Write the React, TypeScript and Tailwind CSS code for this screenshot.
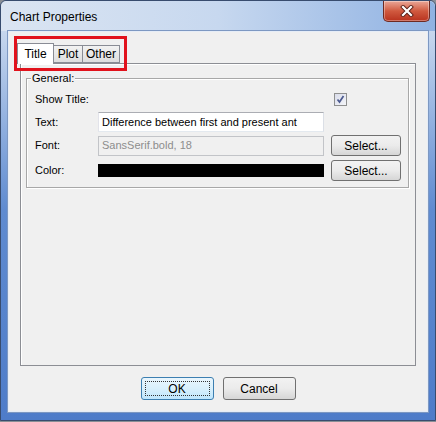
const ui = { fontFamily: '"Liberation Sans", Tahoma, Arial, sans-serif' };

function CloseButton() {
  return (
    <div className="flex h-[21px] w-[47px] items-center justify-center rounded-b-[5px] border border-t-0 border-[#6e2a22] bg-gradient-to-b from-[#e9a798] via-[#d0593f] to-[#b8311d] shadow-[inset_0_0_0_1px_rgba(255,255,255,0.35)]">
      <svg viewBox="0 0 14 12" className="h-[12px] w-[14px]">
        <path d="M3 2l8 8M11 2l-8 8" stroke="#5a2018" strokeWidth="4" strokeLinecap="square" />
        <path d="M3 2l8 8M11 2l-8 8" stroke="#fff" strokeWidth="2.2" strokeLinecap="square" />
      </svg>
    </div>
  );
}

function Checkbox() {
  return (
    <div className="flex h-[13px] w-[13px] items-center justify-center border border-[#8e8f8f] bg-gradient-to-br from-[#d9dcea] to-[#f4f5f8]">
      <svg viewBox="0 0 9 9" className="h-[9px] w-[9px]">
        <path d="M1.5 4.5l2 2.5 4-6" fill="none" stroke="#4c5a8f" strokeWidth="1.7" />
      </svg>
    </div>
  );
}

function WinButton({ label, focused }: { label: string; focused?: boolean }) {
  return (
    <button
      className={`flex items-center justify-center rounded-[3px] border text-[12px] text-black ${
        focused
          ? "border-[#3c7fb1] bg-gradient-to-b from-[#eaf6fd] via-[#d9f0fc] to-[#bee6fd]"
          : "border-[#707070] bg-gradient-to-b from-[#f2f2f2] via-[#ebebeb] to-[#d6d6d6]"
      } h-full w-full`}
      style={ui}
    >
      {focused ? (
        <span className="flex h-[calc(100%-6px)] w-[calc(100%-6px)] items-center justify-center border border-dotted border-[#333]">
          {label}
        </span>
      ) : (
        label
      )}
    </button>
  );
}

export default function App() {
  return (
    <div className="relative h-[422px] w-[436px] bg-[#8a8f96]">
      <div
        className="flex h-[421px] w-[436px] flex-col rounded-t-[6px] border border-[#384c6e] bg-gradient-to-b from-[#d9e4f2] via-[#5f8bd0] to-[#4e7cc9]"
        style={ui}
      >
        {/* title bar */}
        <div className="flex h-[30px] items-start justify-between rounded-t-[6px] bg-gradient-to-r from-[#dbe5f2] via-[#c7d8ef] to-[#90b2e2]">
          <span className="pl-[9px] pt-[9px] text-[12px] leading-[14px] text-black">Chart Properties</span>
          <div className="mr-[5px]">
            <CloseButton />
          </div>
        </div>

        {/* client area */}
        <div className="mx-[7px] flex h-[381px] flex-col border border-[#e6edf7] bg-[#f0f0f0] shadow-[0_0_0_1px_#7d98c2]">
          <div className="mt-[11px] px-[11px]">
            {/* tabs */}
            <div className="-ml-[3px] flex h-[20px] items-end">
              <div className="z-10 -mb-px flex h-[21px] w-[37px] items-center justify-center border border-b-0 border-[#898c95] bg-white text-[12px] text-black">
                Title
              </div>
              <div className="flex h-[18px] w-[29px] items-center justify-center border border-l-0 border-[#898c95] bg-gradient-to-b from-[#f2f2f2] to-[#dedede] text-[12px] text-black">
                Plot
              </div>
              <div className="flex h-[18px] w-[37px] items-center justify-center border border-l-0 border-[#898c95] bg-gradient-to-b from-[#f2f2f2] to-[#dedede] text-[12px] text-black">
                Other
              </div>
            </div>

            {/* tab panel */}
            <div className="h-[303px] border border-[#8c8e94] bg-[#f0f0f0] px-[5px] pt-[14px] shadow-[inset_1px_1px_0_#fff]">
              <div className="relative mr-[1px] h-[110px] border border-[#a8a8a8] shadow-[inset_1px_1px_0_#fff,1px_1px_0_#fff] pl-[8px] pt-[12px]">
                <span className="absolute -top-[8px] left-[4px] bg-[#f0f0f0] px-[1px] text-[11px] leading-[14px] text-black">
                  General:
                </span>

                <div className="flex h-[16px] items-center">
                  <span className="w-[63px] text-[11px] text-black">Show Title:</span>
                  <span className="w-[226px]" />
                  <span className="ml-[10px]">
                    <Checkbox />
                  </span>
                </div>

                <div className="mt-[5px] flex h-[20px] items-center">
                  <span className="w-[63px] text-[11px] text-black">Text:</span>
                  <div className="flex h-[20px] w-[226px] items-center border border-[#abadb3] border-l-[#e2e3ea] border-r-[#dbdfe6] border-b-[#e3e9ef] bg-white pl-[3px] text-[11px] text-black">
                    Difference between first and present ant
                  </div>
                </div>

                <div className="mt-[3px] flex h-[21px] items-center">
                  <span className="w-[63px] text-[11px] text-black">Font:</span>
                  <div className="flex h-[20px] w-[226px] items-center border border-[#c2c4c8] bg-[#f0f0f0] pl-[3px] text-[11px] text-[#8d8d8d]">
                    SansSerif.bold, 18
                  </div>
                  <div className="ml-[7px] h-[21px] w-[70px]">
                    <WinButton label="Select..." />
                  </div>
                </div>

                <div className="mt-[4px] flex h-[21px] items-center">
                  <span className="w-[63px] text-[11px] text-black">Color:</span>
                  <div className="h-[13px] w-[226px] bg-black" />
                  <div className="ml-[7px] h-[21px] w-[70px]">
                    <WinButton label="Select..." />
                  </div>
                </div>
              </div>
            </div>
          </div>

          {/* dialog buttons */}
          <div className="mt-[11px] flex justify-center gap-[9px]">
            <div className="h-[23px] w-[73px]">
              <WinButton label="OK" focused />
            </div>
            <div className="h-[23px] w-[73px]">
              <WinButton label="Cancel" />
            </div>
          </div>
        </div>
      </div>

      {/* red annotation box */}
      <div className="pointer-events-none absolute left-[14px] top-[36px] h-[35px] w-[113px] border-[3px] border-[#e1121c]" />
    </div>
  );
}
